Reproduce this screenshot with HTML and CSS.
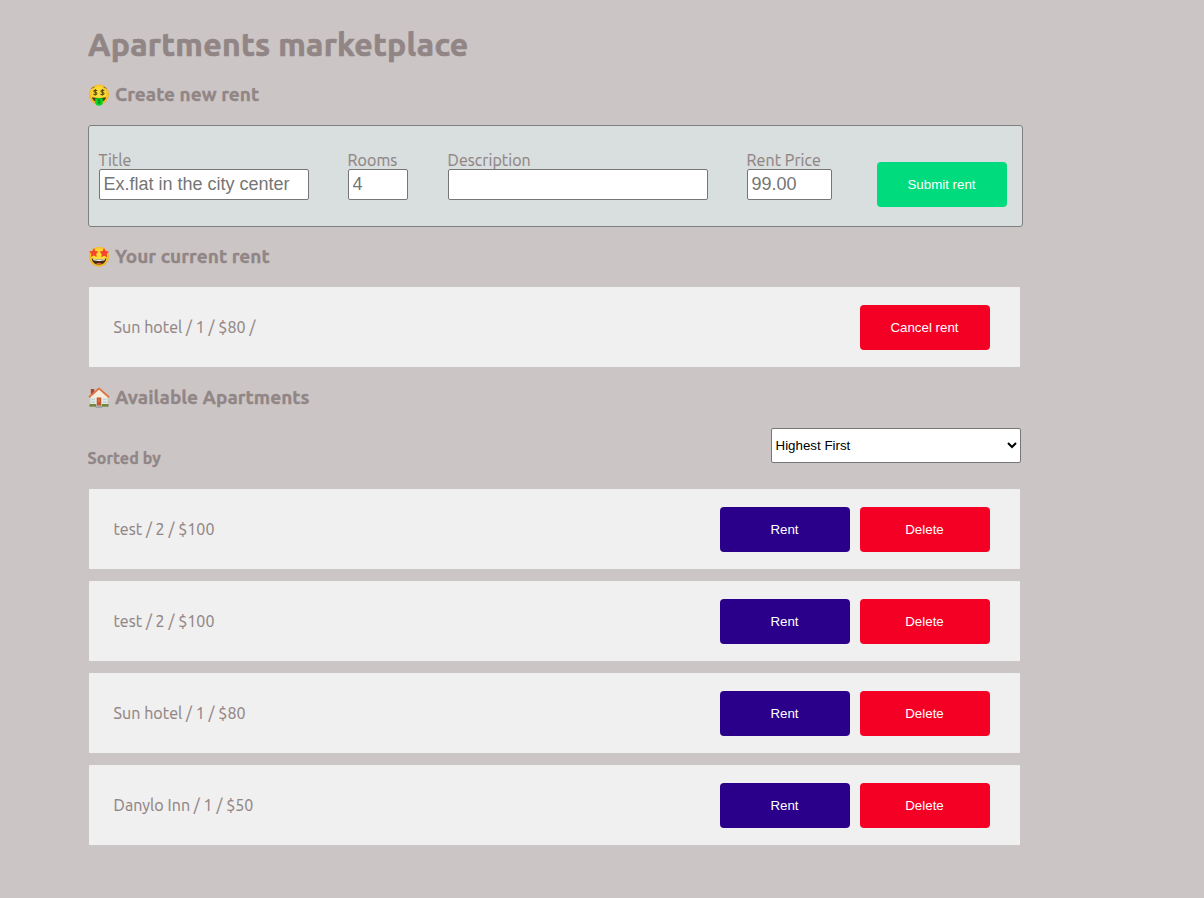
FILE: index.html
```
<!DOCTYPE html>
<html lang="en">
<head>
<meta charset="utf-8">
<title>Apartments marketplace</title>
<link rel="stylesheet" href="styles.css">
</head>
<body>
<main class="page">
  <h1 class="page-title">Apartments marketplace</h1>

  <h2 class="heading">
    <svg class="emoji" viewBox="0 0 22 22" aria-hidden="true">
      <defs><radialGradient id="face" cx=".5" cy=".45" r=".58"><stop offset=".5" stop-color="#fddc35"/><stop offset="1" stop-color="#f1a51c"/></radialGradient></defs>
      <circle cx="11" cy="10.5" r="10" fill="url(#face)"/>
      <path d="M3.5 4.8q1-1.7 3-1.8M18.5 4.8q-1-1.7-3-1.8" fill="none" stroke="#715018" stroke-width=".8"/>
      <g fill="none" stroke="#5d5214" stroke-width="1.1"><path d="M9.2 6.9q-1.5-1.3-2.9-.5-1.2 1.5 1 1.9 2.4.5 1.2 2-1.5 1-3.1-.3M7.4 5v6.4"/><path d="M16.3 6.9q-1.5-1.3-2.9-.5-1.2 1.5 1 1.9 2.4.5 1.2 2-1.5 1-3.1-.3M14.5 5v6.4"/></g>
      <path d="M4 13.2q7 1.4 14 0-.5 4.6-7 4.6t-7-4.6Z" fill="#493e18"/>
      <path d="M7.2 14.5q3.8-1.2 7.6 0v4.3q-.4 2.9-3.8 2.9t-3.8-2.9Z" fill="#08d424"/>
      <path d="M12.3 16q-2.5-.7-2.3.6 2.6.5 2 1.9-1.1.8-2.3-.1M11 15v5" fill="none" stroke="#087d1c" stroke-width=".8"/>
    </svg>
    Create new rent
  </h2>

  <form class="rent-form">
    <label class="field field-title"><span>Title</span><input class="input" placeholder="Ex.flat in the city center"></label>
    <label class="field field-rooms"><span>Rooms</span><input class="input" placeholder="4"></label>
    <label class="field field-desc"><span>Description</span><input class="input"></label>
    <label class="field field-price"><span>Rent Price</span><input class="input" placeholder="99.00"></label>
    <button class="btn btn-submit" type="button">Submit rent</button>
  </form>

  <h2 class="heading">
    <svg class="emoji" viewBox="0 0 22 22" aria-hidden="true">
      <circle cx="11" cy="10.8" r="10" fill="url(#face)"/>
      <path d="m6 2 1.4 2.9 3.1.5-2.2 2.3.4 3.3-2.9-1.4-3 1.5.5-3.4L1 5.5l3.4-.6ZM16 2l1.6 2.9 3.4.6-2.3 2.4.5 3.4-3-1.5-2.9 1.4.4-3.3-2.2-2.3 3.1-.5Z" fill="#f5452e"/>
      <path d="M3.7 12.5q7.3 1.7 14.6 0-.8 6.1-7.3 6.1t-7.3-6.1Z" fill="#422b17"/>
      <path d="M4.9 12.9q6.1 1 12.2 0l-.6 1.4q-5.5 1.2-11 0Z" fill="#fff"/>
      <path d="M7.8 17.5q3.2-1.4 6.4 0-3.2 1.5-6.4 0Z" fill="#d95a45"/>
    </svg>
    Your current rent
  </h2>

  <article class="card card-current">
    <p class="card-text">Sun hotel / 1 / $80 /</p>
    <button class="btn btn-delete" type="button">Cancel rent</button>
  </article>

  <h2 class="heading">
    <svg class="emoji" viewBox="0 0 22 22" aria-hidden="true">
      <path d="M2.8 2h3.5v6H2.8Z" fill="#a84930"/>
      <path d="M2.5 9.8 11 2.5l8.5 7.3v9.5h-17Z" fill="#f4eddc"/>
      <path d="M1 10.2 11 1.4l10 8.8" fill="none" stroke="#e07346" stroke-width="1.8" stroke-linejoin="round"/>
      <path d="M3.3 11.5h3.9v4.7H3.3ZM14.8 11.5h3.9v4.7h-3.9Z" fill="#b9d5d8"/>
      <path d="M3.3 13.8h3.9M14.8 13.8h3.9" stroke="#fff" stroke-width=".7"/>
      <path d="M8.7 10.5h4.6v8.3H8.7Z" fill="#c45734"/>
      <path d="M10.2 12h1.6v3h-1.6Z" fill="#d17a5a"/>
      <path d="M1.5 17h6.7v2.8H1.5ZM13.8 17h6.7v2.8h-6.7Z" fill="#71883f"/>
      <path d="M8.2 18.6h5.6l.7 2.5h-7Z" fill="#a4a4a4"/>
    </svg>
    Available Apartments
  </h2>

  <div class="sort-row">
    <h4 class="sort-label">Sorted by</h4>
    <select class="sort-select"><option>Highest First</option></select>
  </div>

  <section class="list">
    <article class="card"><p class="card-text">test / 2 / $100</p><button class="btn btn-rent" type="button">Rent</button><button class="btn btn-delete" type="button">Delete</button></article>
    <article class="card"><p class="card-text">test / 2 / $100</p><button class="btn btn-rent" type="button">Rent</button><button class="btn btn-delete" type="button">Delete</button></article>
    <article class="card"><p class="card-text">Sun hotel / 1 / $80</p><button class="btn btn-rent" type="button">Rent</button><button class="btn btn-delete" type="button">Delete</button></article>
    <article class="card"><p class="card-text">Danylo Inn / 1 / $50</p><button class="btn btn-rent" type="button">Rent</button><button class="btn btn-delete" type="button">Delete</button></article>
  </section>
</main>
</body>
</html>
```
FILE: styles.css
```
* { box-sizing: border-box; }
body {
  margin: 0;
  min-height: 898px;
  background: #cbc5c5;
  color: #918585;
  font: 16px/18px Ubuntu, "Noto Sans", sans-serif;
}
.page { width: 935px; margin-left: 88px; padding-top: 24px; }
.page-title {
  margin: 0 0 18px;
  height: 40px;
  font-size: 32px;
  line-height: 40px;
  letter-spacing: .27px;
  -webkit-text-stroke: .7px;
}
.heading {
  display: flex;
  align-items: center;
  gap: 5px;
  height: 24px;
  margin: 0 0 19px;
  font-size: 19px;
  line-height: 24px;
  letter-spacing: .03px;
  -webkit-text-stroke: .35px;
}
.emoji { width: 22px; height: 22px; flex: none; margin-top: 2px; }

.rent-form {
  display: flex;
  height: 102px;
  margin-bottom: 17px;
  padding: 25px 10px 0;
  border: 1px solid #808080;
  border-radius: 3px;
  background: #d9dfdf;
}
.field { display: flex; flex-direction: column; letter-spacing: .06px; }
.field span { height: 18px; margin-left: -.4px; white-space: nowrap; -webkit-text-stroke: .15px; }
.field-title { width: 210px; margin-right: 39px; }
.field-rooms { width: 60px; margin-right: 40px; }
.field-desc { width: 260px; margin-right: 39px; }
.field-price { width: 85px; margin-right: 45px; }
.input {
  width: 100%;
  height: 31px;
  padding: 1px 3px 1px 3.5px;
  border: 1px solid #767676;
  border-radius: 2px;
  background: #fff;
  font: 18px "Liberation Sans", sans-serif;
}
.input::placeholder { color: #757575; }

.btn {
  width: 130px;
  height: 45px;
  flex: none;
  padding: 0 1px 0 0;
  border: 0;
  border-radius: 4px;
  color: #fff;
  font: 13.333px "Liberation Sans", sans-serif;
}
.btn-submit { margin-top: 11px; background: #00db7d; }
.btn-rent { background: #2a008b; }
.btn-delete { background: #f50025; }

.card {
  display: flex;
  align-items: center;
  gap: 10px;
  width: 931px;
  height: 80px;
  margin-left: 1px;
  padding: 0 30px 0 24.5px;
  border-radius: 1px;
  background: #f0f0f0;
}
.card-text { flex: 1; margin: 0; letter-spacing: .08px; -webkit-text-stroke: .15px; }
.card-current { margin-bottom: 18px; }

.sort-row {
  display: flex;
  justify-content: space-between;
  width: 933px;
  height: 61px;
}
.sort-label { margin: 21px 0 0 -.5px; font-size: 16px; letter-spacing: .1px; -webkit-text-stroke: .3px; }
.sort-select {
  width: 250px;
  height: 35px;
  padding: 0;
  border: 1px solid #767676;
  border-radius: 2px;
  background: #fff;
  color: #000;
  font: 13.333px "Liberation Sans", sans-serif;
  text-indent: -.5px;
}
.list { display: grid; gap: 12px; }
```
